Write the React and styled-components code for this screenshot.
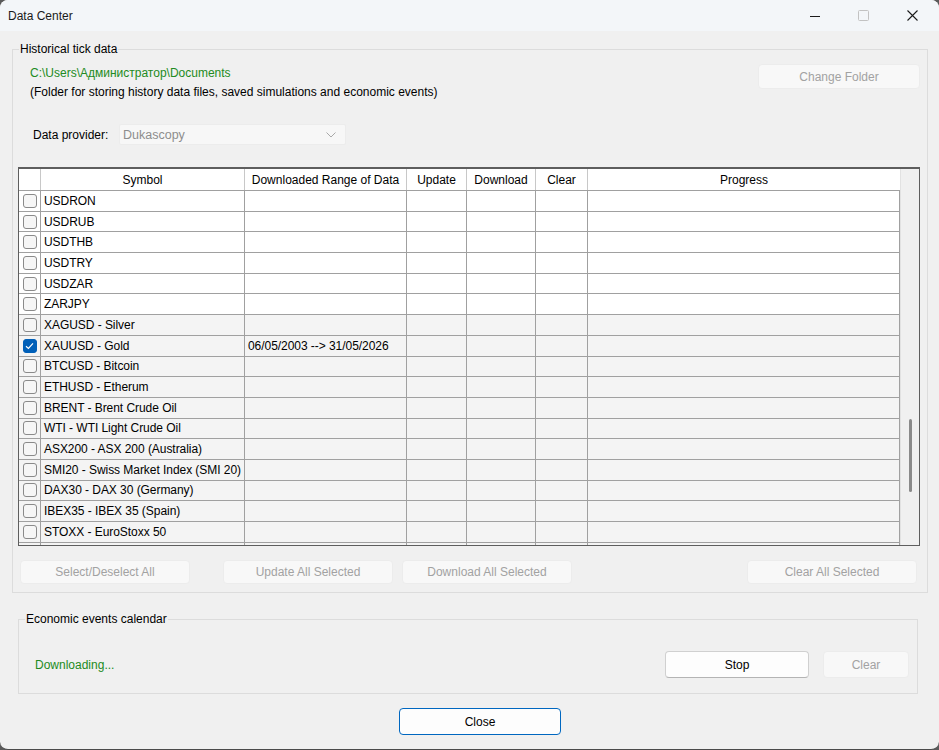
import React from "react";
import styled, { createGlobalStyle } from "styled-components";

const COLS = "22px 204px 162px 60px 69px 52px 1fr";

const symbols = [
  { name: "USDRON" },
  { name: "USDRUB" },
  { name: "USDTHB" },
  { name: "USDTRY" },
  { name: "USDZAR" },
  { name: "ZARJPY" },
  { name: "XAGUSD - Silver", shaded: true },
  { name: "XAUUSD - Gold", shaded: true, checked: true, range: "06/05/2003 --> 31/05/2026" },
  { name: "BTCUSD - Bitcoin", shaded: true },
  { name: "ETHUSD - Etherum", shaded: true },
  { name: "BRENT - Brent Crude Oil", shaded: true },
  { name: "WTI - WTI Light Crude Oil", shaded: true },
  { name: "ASX200 - ASX 200 (Australia)", shaded: true },
  { name: "SMI20 - Swiss Market Index (SMI 20)", shaded: true },
  { name: "DAX30 - DAX 30 (Germany)", shaded: true },
  { name: "IBEX35 - IBEX 35 (Spain)", shaded: true },
  { name: "STOXX - EuroStoxx 50", shaded: true },
  { name: "", shaded: true },
];

const App = () => {
  return (
    <>
      <GlobalStyle />
      <Window>
        <TitleBar>
          <Title>Data Center</Title>
          <CaptionButton>
            <svg width="10" height="10" viewBox="0 0 10 10">
              <line x1="0" y1="5.5" x2="10" y2="5.5" stroke="#1b1b1b" strokeWidth="1" />
            </svg>
          </CaptionButton>
          <CaptionButton>
            <svg width="11" height="11" viewBox="0 0 11 11">
              <rect x="0.5" y="0.5" width="10" height="10" rx="1" fill="none" stroke="#c2c2c2" />
            </svg>
          </CaptionButton>
          <CaptionButton>
            <svg width="11" height="11" viewBox="0 0 11 11">
              <path d="M0.5 0.5 L10.5 10.5 M10.5 0.5 L0.5 10.5" stroke="#1b1b1b" strokeWidth="1.1" />
            </svg>
          </CaptionButton>
        </TitleBar>

        <Body>
          <Group $inset="0 11px 0 12px">
            <Legend>Historical tick data</Legend>
            <FolderRow>
              <PathBlock>
                <Status>C:\Users\Администратор\Documents</Status>
                <div>(Folder for storing history data files, saved simulations and economic events)</div>
              </PathBlock>
              <Button disabled $w="162px" $h="25px">Change Folder</Button>
            </FolderRow>

            <ProviderRow>
              <ProviderLabel>Data provider:</ProviderLabel>
              <Combo>
                <span>Dukascopy</span>
                <svg width="10" height="6" viewBox="0 0 10 6">
                  <path d="M0.5 0.5 L5 5 L9.5 0.5" fill="none" stroke="#a8a8a8" strokeWidth="1" />
                </svg>
              </Combo>
            </ProviderRow>

            <TableFrame>
              <Grid>
                <HeaderRow>
                  <HeadCell />
                  <HeadCell>Symbol</HeadCell>
                  <HeadCell>Downloaded Range of Data</HeadCell>
                  <HeadCell>Update</HeadCell>
                  <HeadCell>Download</HeadCell>
                  <HeadCell>Clear</HeadCell>
                  <HeadCell>Progress</HeadCell>
                </HeaderRow>
                <Rows>
                  {symbols.map((s, i) => (
                    <Row key={i} $shaded={s.shaded}>
                      <CheckCell>
                        <CheckBox $checked={s.checked}>
                          {s.checked && (
                            <svg width="9" height="8" viewBox="0 0 9 8">
                              <path d="M1 4.2 L3.4 6.4 L8 1.4" fill="none" stroke="#fff" strokeWidth="1.2" />
                            </svg>
                          )}
                        </CheckBox>
                      </CheckCell>
                      <Cell>{s.name}</Cell>
                      <Cell>{s.range}</Cell>
                      <Cell />
                      <Cell />
                      <Cell />
                      <Cell />
                    </Row>
                  ))}
                </Rows>
              </Grid>
              <ScrollTrack>
                <Thumb />
              </ScrollTrack>
            </TableFrame>

            <ActionRow>
              <Button disabled $w="170px" $h="24px">Select/Deselect All</Button>
              <Button disabled $w="170px" $h="24px" $ml="33px">Update All Selected</Button>
              <Button disabled $w="170px" $h="24px" $ml="9px">Download All Selected</Button>
              <Button disabled $w="170px" $h="24px" $ml="auto">Clear All Selected</Button>
            </ActionRow>
          </Group>

          <Group $inset="19px 21px 0 18px">
            <Legend>Economic events calendar</Legend>
            <CalendarRow>
              <Status>Downloading...</Status>
              <Button $w="144px" $h="27px" $ml="auto">Stop</Button>
              <Button disabled $w="86px" $h="27px" $ml="14px">Clear</Button>
            </CalendarRow>
          </Group>

          <Footer>
            <Button $w="162px" $h="27px" $primary>Close</Button>
          </Footer>
        </Body>
      </Window>
    </>
  );
};

export default App;

const GlobalStyle = createGlobalStyle`
  html, body {
    margin: 0;
    padding: 0;
    background: #5a5a5a;
  }
  body {
    font-family: "Liberation Sans", Arial, sans-serif;
    font-size: 12px;
    color: #000;
  }
  * { box-sizing: border-box; }
`;

const Window = styled.div`
  width: 939px;
  height: 750px;
  background: #f0f0f0;
  border-radius: 8px;
  overflow: hidden;
  display: flex;
  flex-direction: column;
  border-bottom: 1px solid #4a4a4a;
`;

const TitleBar = styled.div`
  height: 31px;
  flex-shrink: 0;
  display: flex;
  align-items: center;
  background: #f3f6f9;
  padding-right: 2px;
`;

const Title = styled.div`
  flex: 1;
  padding-left: 8px;
  color: #1a1a1a;
`;

const CaptionButton = styled.div`
  width: 49px;
  height: 31px;
  display: flex;
  align-items: center;
  justify-content: center;
`;

const Body = styled.div`
  padding-top: 11px;
  display: flex;
  flex-direction: column;
`;

const Group = styled.fieldset`
  margin: ${(p) => p.$inset};
  padding: 0;
  border: 1px solid #dcdcdc;
  min-width: 0;
`;

const Legend = styled.legend`
  margin-left: 6px;
  padding: 0 1px;
  line-height: 14px;
  color: #000;
`;

const FolderRow = styled.div`
  display: flex;
  justify-content: space-between;
  align-items: flex-start;
  padding: 8px 7px 0 17px;
`;

const PathBlock = styled.div`
  line-height: 19px;
`;

const Status = styled.div`
  color: #228b22;
`;

const ProviderRow = styled.div`
  display: flex;
  align-items: center;
  margin-top: 22px;
  padding-left: 20px;
`;

const ProviderLabel = styled.div`
  width: 86px;
`;

const Combo = styled.div`
  width: 227px;
  height: 21px;
  background: #f7f7f7;
  border: 1px solid #ececec;
  border-radius: 2px;
  display: flex;
  align-items: center;
  justify-content: space-between;
  padding: 0 9px 0 3px;
  color: #8d8d8d;
  font-size: 12.5px;
`;

const TableFrame = styled.div`
  margin: 22px 7px 0 5px;
  height: 379px;
  border: 1px solid #5e5e5e;
  border-top-width: 2px;
  display: flex;
  background: #fff;
`;

const Grid = styled.div`
  flex: 1;
  display: flex;
  flex-direction: column;
  overflow: hidden;
`;

const HeaderRow = styled.div`
  display: grid;
  grid-template-columns: ${COLS};
  height: 22px;
  flex-shrink: 0;
  background: #fff;
  border-bottom: 1px solid #a0a0a0;
`;

const HeadCell = styled.div`
  display: flex;
  align-items: center;
  justify-content: center;
  border-right: 1px solid #c8c8c8;
  white-space: nowrap;
  &:last-child { border-right: none; }
`;

const Rows = styled.div`
  flex: 1;
  overflow: hidden;
`;

const Row = styled.div`
  display: grid;
  grid-template-columns: ${COLS};
  height: 20.69px;
  background: ${(p) => (p.$shaded ? "#f4f4f4" : "#fff")};
  border-bottom: 1px solid #a0a0a0;
`;

const Cell = styled.div`
  display: flex;
  align-items: center;
  padding-left: 3px;
  border-right: 1px solid #a0a0a0;
  white-space: nowrap;
  overflow: hidden;
  font-size: 12px;
  letter-spacing: -0.05px;
`;

const CheckCell = styled(Cell)`
  justify-content: center;
  padding-left: 0;
`;

const CheckBox = styled.div`
  width: 14px;
  height: 14px;
  border-radius: 3px;
  border: 1px solid ${(p) => (p.$checked ? "#005fb8" : "#8a8a8a")};
  background: ${(p) => (p.$checked ? "#005fb8" : "#f6f6f6")};
  display: flex;
  align-items: center;
  justify-content: center;
`;

const ScrollTrack = styled.div`
  width: 19px;
  flex-shrink: 0;
  background: #f0f0f0;
  border-left: 1px solid #e2e2e2;
  display: flex;
  justify-content: center;
  padding-top: 250px;
`;

const Thumb = styled.div`
  width: 3px;
  height: 73px;
  border-radius: 2px;
  background: #8a8a8a;
`;

const ActionRow = styled.div`
  display: flex;
  margin-top: 14px;
  padding: 0 10px 8px 7px;
`;

const Button = styled.button`
  width: ${(p) => p.$w};
  height: ${(p) => p.$h};
  margin-left: ${(p) => p.$ml || "0"};
  flex-shrink: 0;
  font-family: "Liberation Sans", Arial, sans-serif;
  font-size: 12px;
  border-radius: 4px;
  padding: 0;
  color: #000;
  background: #fdfdfd;
  border: 1px solid ${(p) => (p.$primary ? "#0067c0" : "#d0d0d0")};
  border-bottom-color: ${(p) => (p.$primary ? "#0067c0" : "#b4b4b4")};
  &:disabled {
    color: #a2a2a2;
    background: #f8f8f8;
    border-color: #ececec;
  }
`;

const CalendarRow = styled.div`
  display: flex;
  align-items: center;
  padding: 25px 8px 15px 16px;
`;

const Footer = styled.div`
  margin-top: 14px;
  padding-left: 399px;
`;
